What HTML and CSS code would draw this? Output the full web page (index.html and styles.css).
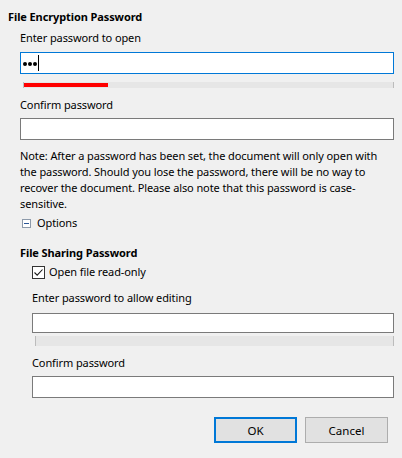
FILE: index.html
```html
<!DOCTYPE html>
<html>
<head>
<meta charset="utf-8">
<link rel="stylesheet" href="styles.css">
</head>
<body>
<div class="dialog">
  <section class="group">
    <div class="group-title">File Encryption Password</div>
    <div class="group-body">
      <div class="label lbl-open">Enter password to open</div>
      <div class="field focused"><span class="dot"></span><span class="dot"></span><span class="dot"></span><span class="caret"></span></div>
      <div class="meter"><div class="meter-fill" style="width:84px"></div></div>
      <div class="label lbl-confirm">Confirm password</div>
      <div class="field"></div>
      <p class="note">Note: After a password has been set, the document will only open with the password. Should you lose the password, there will be no way to recover the document. Please also note that this password is case-sensitive.</p>
      <div class="options">
        <span class="toggle"><span class="minus"></span></span>
        <span>Options</span>
      </div>
    </div>
  </section>
  <section class="group sub">
    <div class="group-title second">File Sharing Password</div>
    <div class="group-body">
      <label class="check-row">
        <span class="checkbox">
          <svg width="11" height="11" viewBox="0 0 11 11"><path d="M1.5 5.5 L4.2 8.2 L9.5 2.5" fill="none" stroke="#1a1a1a" stroke-width="1.1"/></svg>
        </span>
        <span>Open file read-only</span>
      </label>
      <div class="label lbl-edit">Enter password to allow editing</div>
      <div class="field short"></div>
      <div class="meter tall"></div>
      <div class="label lbl-confirm">Confirm password</div>
      <div class="field"></div>
    </div>
  </section>
  <div class="buttons">
    <button class="btn default">OK</button>
    <button class="btn">Cancel</button>
  </div>
</div>
</body>
</html>
```
FILE: styles.css
```css
html, body {
  margin: 0;
  padding: 0;
  background: #f0f0f0;
}
body {
  font-family: "Noto Sans", "Open Sans", sans-serif;
  font-size: 11px;
  letter-spacing: -0.1px;
  color: #000;
}
.dialog {
  padding: 9px 8px 0 8px;
  display: flex;
  flex-direction: column;
}
.group-title {
  font-weight: bold;
  line-height: 16px;
  height: 16px;
}
.group-title.second {
  margin-top: 14px;
}
.group.sub {
  padding-left: 12px;
}
.group-body {
  display: flex;
  flex-direction: column;
  padding-left: 12px;
}
.label {
  line-height: 16px;
  height: 16px;
  white-space: nowrap;
}
.lbl-open { margin-top: 5px; }
.lbl-confirm { margin-top: 9px; }
.lbl-edit { margin-top: 10px; }
.field {
  box-sizing: border-box;
  height: 22px;
  margin-top: 6px;
  background: #fff;
  border: 1px solid #7a7a7a;
  display: flex;
  align-items: center;
  padding-left: 2px;
}
.lbl-confirm + .field { margin-top: 5px; }
.field.short {
  height: 20px;
  margin-top: 7px;
}
.field.focused {
  border-color: #0078d7;
}
.dot {
  width: 4px;
  height: 4px;
  border-radius: 50%;
  background: #000;
  margin-right: 1px;
  margin-top: 1px;
}
.caret {
  width: 1px;
  height: 16px;
  background: #000;
}
.meter {
  box-sizing: border-box;
  height: 6px;
  margin-top: 8px;
  margin-left: 3px;
  background: #e6e6e6;
  border-left: 1px solid #bcbcbc;
  border-right: 1px solid #bcbcbc;
  padding: 1px 0;
}
.meter.tall {
  height: 10px;
  margin-top: 3px;
}
.meter-fill {
  height: 4px;
  background: #ff0000;
}
.note {
  margin: 8px 0 0 0;
  line-height: 16px;
}
.options {
  margin-top: 3px;
  height: 16px;
  line-height: 16px;
  display: flex;
  align-items: center;
  gap: 6px;
  padding-left: 2px;
}
.toggle {
  box-sizing: border-box;
  width: 9px;
  height: 9px;
  border: 1px solid #8d9aaa;
  background: #fff;
  display: flex;
  align-items: center;
  justify-content: center;
}
.minus {
  width: 5px;
  height: 1px;
  background: #2b5797;
}
.check-row {
  margin-top: 3px;
  height: 16px;
  line-height: 16px;
  display: flex;
  align-items: center;
  gap: 4px;
}
.checkbox {
  box-sizing: border-box;
  width: 13px;
  height: 13px;
  border: 1px solid #333;
  background: #fff;
  display: flex;
  align-items: center;
  justify-content: center;
}
.checkbox svg { display: block; }
.buttons {
  margin-top: 19px;
  display: flex;
  justify-content: flex-end;
  gap: 8px;
  padding-right: 6px;
}
.btn {
  box-sizing: border-box;
  width: 83px;
  height: 26px;
  margin: 0;
  font-family: inherit;
  font-size: 11.5px;
  color: #000;
  background: #e1e1e1;
  border: 1px solid #adadad;
  border-radius: 0;
  padding: 0;
}
.btn.default {
  border: 2px solid #0078d7;
}
```
